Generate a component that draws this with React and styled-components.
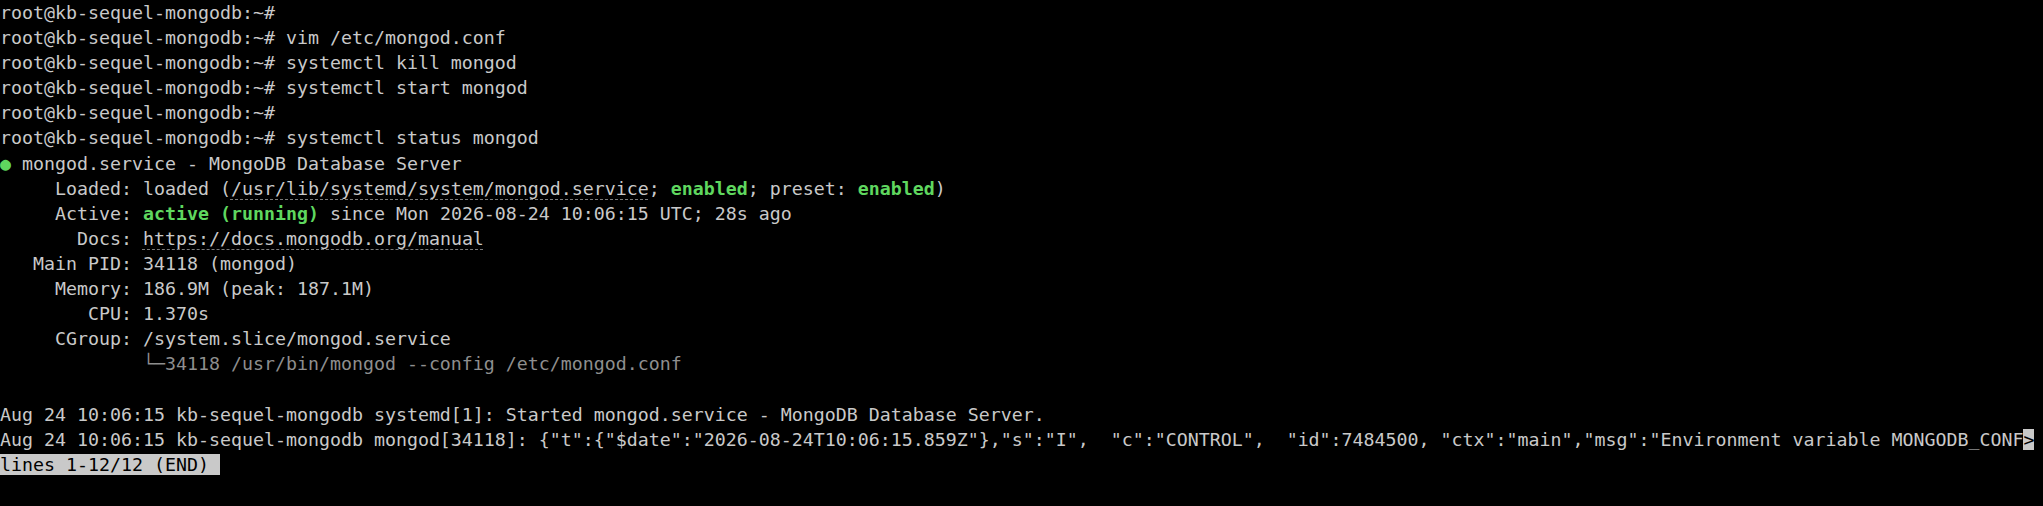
import React from "react";
import styled, { createGlobalStyle } from "styled-components";

const GlobalStyle = createGlobalStyle`
  html, body {
    margin: 0;
    padding: 0;
    background: #000;
  }
`;

const Terminal = styled.div`
  width: 2043px;
  height: 506px;
  overflow: hidden;
  background: #000;
  color: #c9c9c9;
  font-family: "DejaVu Sans Mono", "Liberation Mono", monospace;
  font-size: 18.27px;
  line-height: 25.1px;
  white-space: pre;
`;

const Line = styled.div`
  height: 25.1px;
`;

const Ok = styled.span`
  color: #5fd75f;
  font-weight: ${(props) => (props.$bold ? "bold" : "normal")};
`;

const Dim = styled.span`
  color: #8e8e8e;
`;

const Link = styled.span`
  text-decoration: underline dashed #7a7a7a;
  text-decoration-thickness: 1px;
  text-underline-offset: 4px;
`;

const Reverse = styled.span`
  background: #c9c9c9;
  color: #000;
`;

const prompt = "root@kb-sequel-mongodb:~#";

const commands = ["", " vim /etc/mongod.conf", " systemctl kill mongod", " systemctl start mongod", "", " systemctl status mongod"];

export default function App() {
  return (
    <>
      <GlobalStyle />
      <Terminal>
        {commands.map((cmd, i) => (
          <Line key={i}>
            {prompt}
            {cmd}
          </Line>
        ))}
        <Line>
          <Ok>●</Ok> mongod.service - MongoDB Database Server
        </Line>
        <Line>
          {"     Loaded: loaded ("}
          <Link>/usr/lib/systemd/system/mongod.service</Link>
          {"; "}
          <Ok $bold>enabled</Ok>
          {"; preset: "}
          <Ok $bold>enabled</Ok>)
        </Line>
        <Line>
          {"     Active: "}
          <Ok $bold>active (running)</Ok>
          {" since Mon 2026-08-24 10:06:15 UTC; 28s ago"}
        </Line>
        <Line>
          {"       Docs: "}
          <Link>https://docs.mongodb.org/manual</Link>
        </Line>
        <Line>{"   Main PID: 34118 (mongod)"}</Line>
        <Line>{"     Memory: 186.9M (peak: 187.1M)"}</Line>
        <Line>{"        CPU: 1.370s"}</Line>
        <Line>{"     CGroup: /system.slice/mongod.service"}</Line>
        <Line>
          <Dim>{"             └─34118 /usr/bin/mongod --config /etc/mongod.conf"}</Dim>
        </Line>
        <Line />
        <Line>Aug 24 10:06:15 kb-sequel-mongodb systemd[1]: Started mongod.service - MongoDB Database Server.</Line>
        <Line>
          {'Aug 24 10:06:15 kb-sequel-mongodb mongod[34118]: {"t":{"$date":"2026-08-24T10:06:15.859Z"},"s":"I",  "c":"CONTROL",  "id":7484500, "ctx":"main","msg":"Environment variable MONGODB_CONF'}
          <Reverse>&gt;</Reverse>
        </Line>
        <Line>
          <Reverse>lines 1-12/12 (END) </Reverse>
        </Line>
      </Terminal>
    </>
  );
}
